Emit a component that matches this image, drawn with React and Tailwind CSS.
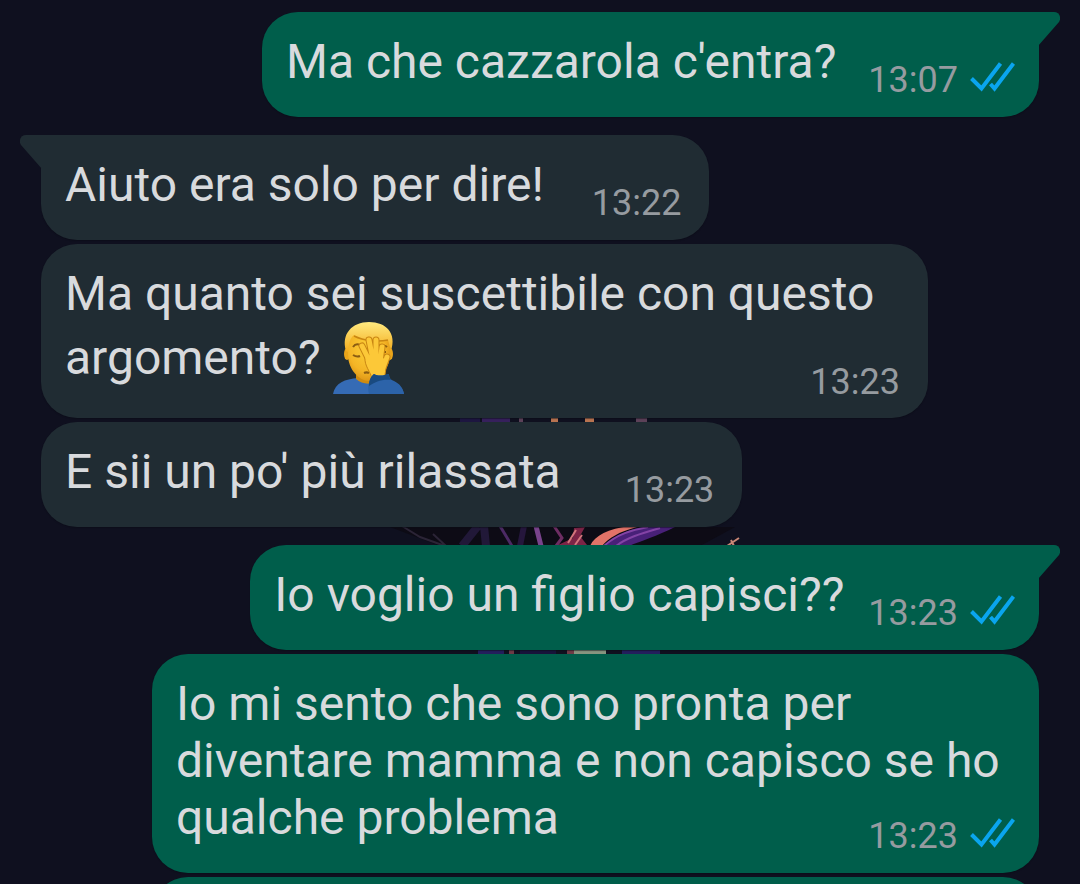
const TAIL = {
  in: 'M22 0H6C1 0-2 5 1 10L22 34Z',
  out: 'M0 0H16C21 0 24 5 21 10L0 34Z',
};

const GROUPS = [
  {
    from: 'out',
    messages: [{ text: "Ma che cazzarola c'entra?", time: '13:07', gap: 'gap-8' }],
  },
  {
    from: 'in',
    messages: [
      { text: 'Aiuto era solo per dire!', time: '13:22', gap: 'gap-12' },
      { text: 'Ma quanto sei suscettibile con questo argomento?', time: '13:23', emoji: true, long: true },
      { text: "E sii un po' più rilassata", time: '13:23', gap: 'gap-16' },
    ],
  },
  {
    from: 'out',
    messages: [
      { text: 'Io voglio un figlio capisci??', time: '13:23', gap: 'gap-6' },
      {
        text: 'Io mi sento che sono pronta per diventare mamma e non capisco se ho qualche problema',
        time: '13:23',
        long: true,
      },
      { text: '', time: '', long: true },
    ],
  },
];

function Ticks() {
  return (
    <svg className="w-[45px] h-[30px]" viewBox="0 0 45 30" fill="none" stroke="#0aa5ee" strokeWidth="4" role="img" aria-label="Letto">
      <path d="M1.5 16.5L11.5 26.5L30.5 1.5" />
      <path d="M20.5 22L24.5 26.5L43.5 1.5" />
    </svg>
  );
}

function Facepalm() {
  return (
    <svg className="inline-block w-[72px] h-[73px] -mb-1 align-[-17px]" viewBox="0 0 72 73" role="img" aria-label="Facepalm">
      <defs>
        <radialGradient id="face" cx="45%" cy="40%" r="65%">
          <stop offset="0" stopColor="#fbcf38" />
          <stop offset="0.65" stopColor="#f4b526" />
          <stop offset="1" stopColor="#d98f12" />
        </radialGradient>
        <linearGradient id="hair" x1="0" y1="0" x2="0" y2="1">
          <stop offset="0" stopColor="#ffea80" />
          <stop offset="1" stopColor="#f3ab1c" />
        </linearGradient>
      </defs>
      <path d="M0 72C2 61 12 57 25 56H45C59 57 69 62 71 72Z" fill="#356bb5" />
      <path d="M23 46H45V58C38 64 29 62 23 57Z" fill="#cf8b10" />
      <ellipse cx="14" cy="32" rx="3" ry="6" fill="#e9a41a" />
      <ellipse cx="57" cy="32" rx="3" ry="6" fill="#e9a41a" />
      <path d="M15 20C15 8 24 4 36 4S57 9 57 21V34C56 47 46 59 36 59S15 47 15 33Z" fill="url(#face)" />
      <path d="M13 29C8 12 19 0 36 0S64 11 58 29L55 18C46 20 31 19 21 13C17 16 16 21 15 30Z" fill="url(#hair)" />
      <path d="M21 14C31 19 45 20 55 18" fill="none" stroke="#c98613" strokeWidth="1.5" />
      <path d="M20 25C22 22 25 22 27 23M20 33C23 35 25 35 27 34M50 24C52 23 53 24 54 25M50 30H53M31 51C33 50 34 50 36 51" fill="none" stroke="#8a5c12" strokeWidth="2" />
      {/* fingers, palm and thumb */}
      <g fill="none" stroke="#c98613" strokeWidth="7" strokeLinecap="round">
        <path d="M29 24L37 40M36 18L40 38M43 18L43 38M49 25L47 40M54 35L50 46" />
      </g>
      <path d="M32 35C38 31 47 32 51 36C54 42 53 52 50 59L39 57C38 50 31 44 32 35Z" fill="#fcc838" stroke="#c98613" />
      <g fill="none" stroke="#fcc838" strokeWidth="5" strokeLinecap="round">
        <path d="M29 24L37 40M36 18L40 38M43 18L43 38M49 25L47 40M54 35L50 46" />
      </g>
      <path d="M36 38H47L50 46L47 57H41C40 50 35 45 36 38Z" fill="#fcc838" />
      <path d="M36 72C34 65 36 57 41 52C46 55 52 53 56 52C56 56 58 58 61 59C67 62 70 66 71 72Z" fill="#2c63a9" />
      <path d="M36 64C36 58 38 54 41 52C46 55 52 53 56 52C56 55 57 57 58 58C49 57 42 60 36 64Z" fill="#194a80" />
    </svg>
  );
}

// Dark feathered artwork of the chat wallpaper, mostly hidden by the bubbles
function Wallpaper() {
  return (
    <svg className="absolute left-1/2 top-[412px] -ml-[200px] w-[400px] h-[246px]" viewBox="340 412 400 246" fill="none" aria-hidden="true">
      <g>
        <path d="M460 420H480" stroke="#1d1640" strokeWidth="6" />
        <path d="M482 420H510" stroke="#36205c" strokeWidth="6" />
        <path d="M519 420H523M636 420H647" stroke="#5c4158" strokeWidth="6" />
        <path d="M551 420H558M585 420H594" stroke="#b87350" strokeWidth="6" />
      </g>
      <g>
        <path d="M390 527H735L700 546H440Z" fill="#0d0b15" />
        <path d="M402 526L420 537L445 546M433 534L446 546" stroke="#2b2436" strokeWidth="2" />
        <path d="M462 546L478 526M484 526L486 546" stroke="#211838" strokeWidth="8" />
        <path d="M500 526L512 546" stroke="#4c2a64" strokeWidth="3" />
        <path d="M524 526L520 546" stroke="#25163c" strokeWidth="6" />
        <path d="M536 526L541 546" stroke="#79438c" strokeWidth="5" />
        <path d="M554 526L562 538L556 546" stroke="#6e2d63" strokeWidth="3" />
        <path d="M574 528L585 527L580 536L587 545H558L573 538Z" fill="#7c2446" />
        <path d="M576 530L568 543M582 535L575 545" stroke="#d2757c" strokeWidth="2" />
        <path d="M590 546C595 535 608 529 630 526L637 527C618 532 609 538 602 546Z" fill="#e27368" />
        <path d="M605 546C615 534 633 527 655 526L675 527C657 536 641 541 629 546Z" fill="#482078" />
        <path d="M604 546C617 534 632 530 648 527M616 546C628 537 643 533 660 528" stroke="#8343a5" strokeWidth="2" />
        <path d="M727 546L739 538M731 540L734 546" stroke="#c98776" strokeWidth="2" />
      </g>
      <g>
        <path d="M478 652H504M622 652H660" stroke="#231e5c" strokeWidth="5" />
        <path d="M509 652H514M567 652H574" stroke="#6e3b46" strokeWidth="5" />
        <path d="M520 652H556" stroke="#17133a" strokeWidth="5" />
        <path d="M574 652H606" stroke="#87947f" strokeWidth="5" />
      </g>
    </svg>
  );
}

function Meta({ time, out, className }) {
  return (
    <span className={`flex items-end gap-3 text-[36px] leading-9 text-[#969ba0] ${className}`}>
      <time>{time}</time>
      {out && <span className="flex pb-1.5"><Ticks /></span>}
    </span>
  );
}

function Bubble({ message, from, first }) {
  const { text, time, gap, long, emoji } = message;
  const out = from === 'out';
  const color = out ? 'bg-[#005e4b]' : 'bg-[#202c33]';
  const corner = first ? (out ? 'rounded-tr-none' : 'rounded-tl-none') : '';
  const layout = long ? 'w-full max-w-[887px]' : `flex ${gap}`;

  return (
    <div className={`relative rounded-[36px] pt-[21px] pl-6 shadow-[0_1px_1px_#0a0b1580] ${out ? 'pr-6' : 'pr-7'} ${color} ${corner} ${layout}`}>
      {first && (
        <svg
          className={`absolute top-0 w-[22px] h-[34px] ${out ? 'left-full -ml-px' : 'right-full -mr-px'}`}
          viewBox="0 0 22 34"
          fill={out ? '#005e4b' : '#202c33'}
          aria-hidden="true"
        >
          <path d={TAIL[from]} />
        </svg>
      )}
      <p className="min-h-[84px] pb-[27px] text-[48px] leading-[57px] text-[#d8dadd]">
        {text}
        {emoji && <> <Facepalm /></>}
        {/* long messages wrap, and the time floats into their last line */}
        {long && time && <Meta time={time} out={out} className={emoji ? 'float-right mt-[42px]' : 'float-right mt-[29px]'} />}
      </p>
      {!long && <Meta time={time} out={out} className="self-end pb-[19px]" />}
    </div>
  );
}

export default function App() {
  return (
    <main className="relative h-screen overflow-hidden bg-[#0f101f] font-[Roboto,sans-serif]">
      <Wallpaper />
      <div className="relative flex flex-col gap-[18px] px-[41px] pt-3">
        {GROUPS.map((group, i) => (
          <section key={i} className={`flex flex-col gap-1 ${group.from === 'out' ? 'items-end' : 'items-start'}`}>
            {group.messages.map((message, j) => (
              <Bubble key={j} message={message} from={group.from} first={j === 0} />
            ))}
          </section>
        ))}
      </div>
    </main>
  );
}
